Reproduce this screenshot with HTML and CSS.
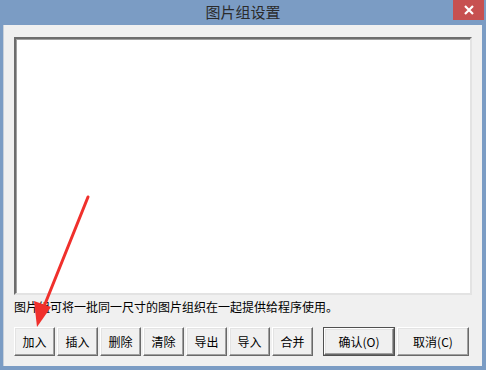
FILE: index.html
```html
<!DOCTYPE html>
<html lang="zh">
<head>
<meta charset="utf-8">
<title>图片组设置</title>
<link rel="stylesheet" href="styles.css">
</head>
<body>
<div class="window">
  <div class="titlebar">
    <span class="title">图片组设置</span>
    <div class="close">
      <svg width="12" height="10" viewBox="0 0 12 10"><path d="M2 1 L10 9 M10 1 L2 9" stroke="#fff" stroke-width="2.2" fill="none"/></svg>
    </div>
  </div>
  <div class="client">
    <div class="listbox"></div>
    <div class="caption">图片组可将一批同一尺寸的图片组织在一起提供给程序使用。</div>
    <div class="buttons">
      <div class="group">
        <button class="btn">加入</button>
        <button class="btn">插入</button>
        <button class="btn">删除</button>
        <button class="btn">清除</button>
        <button class="btn">导出</button>
        <button class="btn">导入</button>
        <button class="btn">合并</button>
      </div>
      <div class="group">
        <button class="btn wide default">确认(O)</button>
        <button class="btn wide">取消(C)</button>
      </div>
    </div>
  </div>
  <svg class="arrow" width="486" height="370" viewBox="0 0 486 370">
    <path d="M88 197 L45 304" stroke="#f0302c" stroke-width="3" fill="none" stroke-linecap="round"/>
    <path d="M37 327 L34 301 L51 307 Z" fill="#f0302c"/>
  </svg>
</div>
</body>
</html>
```
FILE: styles.css
```css
html, body {
  margin: 0;
  padding: 0;
}
body {
  width: 486px;
  height: 370px;
  overflow: hidden;
  font-family: "Noto Sans CJK SC", "Liberation Sans", sans-serif;
  font-size: 12px;
  color: #000;
}
.window {
  position: relative;
  width: 486px;
  height: 370px;
  background: #7b9cc4;
  display: flex;
  flex-direction: column;
}
.titlebar {
  position: relative;
  height: 25px;
  display: flex;
  align-items: center;
  justify-content: center;
}
.title {
  font-size: 15px;
  color: #2b2b2b;
  margin-top: -2px;
}
.close {
  position: absolute;
  right: 2px;
  top: 0;
  width: 31px;
  height: 20px;
  background: #c75050;
  display: flex;
  align-items: center;
  justify-content: center;
}
.client {
  margin: 0 4px 4px 3px;
  flex: 1;
  background: #f0f0f0;
  border-left: 1px solid #c8d0da;
  padding: 12px 0 0 10px;
  display: flex;
  flex-direction: column;
}
.listbox {
  width: 454px;
  height: 254px;
  background: #fff;
  border-top: 2px solid #6d6d6d;
  border-left: 2px solid #6d6d6d;
  border-right: 2px solid #e3e3e3;
  border-bottom: 2px solid #e3e3e3;
  box-shadow: inset 1px 1px 0 #a0a0a0;
}
.caption {
  margin-top: 3px;
  height: 17px;
  line-height: 17px;
  white-space: nowrap;
}
.buttons {
  margin-top: 12px;
  display: flex;
  gap: 10px;
}
.group {
  display: flex;
  gap: 2px;
}
.btn {
  width: 41px;
  height: 29px;
  padding: 0;
  margin: 0;
  font-family: inherit;
  font-size: 12px;
  color: #000;
  background: #f0f0f0;
  border-top: 1px solid #fff;
  border-left: 1px solid #fff;
  border-right: 1px solid #696969;
  border-bottom: 1px solid #696969;
  box-shadow: inset -1px -1px 0 #a0a0a0, inset 1px 1px 0 #e3e3e3;
}
.btn.wide {
  width: 72px;
}
.btn.default {
  outline: 1px solid #505050;
  outline-offset: -1px;
  border-width: 2px;
}
.arrow {
  position: absolute;
  left: 0;
  top: 0;
  pointer-events: none;
}
```
